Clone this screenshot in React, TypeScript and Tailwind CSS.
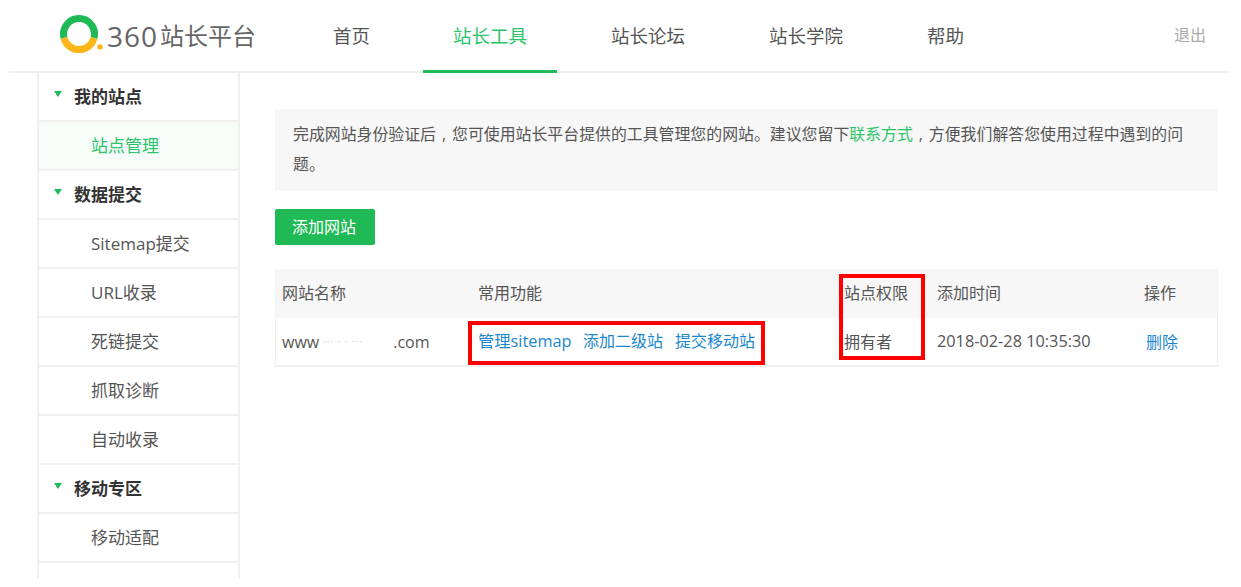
const font = { fontFamily: '"Open Sans","Noto Sans CJK SC",sans-serif' };

function Tri() {
  return <span className="mr-[12px] mb-[5px] h-0 w-0 border-x-[4.5px] border-t-[6px] border-x-transparent border-t-[#22bb5c]" />;
}

function Comma() {
  return <span className="inline-block w-[16px] text-center">{"\uFF0C".normalize("NFKC")}</span>;
}

function Head({ t }: { t: string }) {
  return (
    <div className="flex h-[49px] items-center border-b-2 border-[#f0f0f0] pl-[15px] text-[17px] font-bold text-[#333]">
      <Tri />
      {t}
    </div>
  );
}

function Item({ t, active }: { t: string; active?: boolean }) {
  return (
    <div
      className={
        "flex h-[49px] items-center border-b-2 border-[#f0f0f0] pl-[52px] pt-[1px] text-[17px] " +
        (active ? "bg-[#f6fdf9] text-[#2cc36b]" : "text-[#555]")
      }
    >
      {t}
    </div>
  );
}

function Nav({ t, active, first }: { t: string; active?: boolean; first?: boolean }) {
  return (
    <div
      className={
        "flex h-[73px] items-center border-b-[3px] pl-[30px] pt-[1px] text-[18.5px] " +
        (first ? "pr-[29px] " : "pr-[30px] ") +
        (active ? "border-[#21bb5a] text-[#2cc36b]" : "border-transparent text-[#555]")
      }
    >
      {t}
    </div>
  );
}

export default function App() {
  return (
    <div style={font} className="relative h-[587px] w-[1241px] overflow-hidden bg-white">
      <header className="ml-[9px] flex h-[73px] w-[1218px] items-start border-b-2 border-[#eeeeee]">
        <div className="flex h-[71px] w-[294px] shrink-0 items-center pl-[50px]">
          <svg width="44" height="42" viewBox="0 0 44 42" className="shrink-0">
            <path d="M5 23 A15.5 15.5 0 1 1 35 23" fill="none" stroke="#1fb955" strokeWidth="7" />
            <path d="M35 23 A15.5 15.5 0 0 1 5 23" fill="none" stroke="#fdb61a" strokeWidth="7" />
            <circle cx="41" cy="32" r="2.7" fill="#fdb61a" />
          </svg>
          <span className="ml-[4px] flex items-center whitespace-nowrap text-[24px] leading-none text-[#666]">
            <span className="w-[53px] text-[28px] tracking-[1px]">360</span>
            <span>站长平台</span>
          </span>
        </div>
        <nav className="flex gap-[24px]">
          <Nav t="首页" first />
          <Nav t="站长工具" active />
          <Nav t="站长论坛" />
          <Nav t="站长学院" />
          <Nav t="帮助" />
        </nav>
        <div className="ml-auto flex h-[71px] items-center pb-[1px] pr-[21px] text-[16px] text-[#aaa]">退出</div>
      </header>

      <div className="flex">
        <aside className="ml-[37px] h-[506px] w-[203px] shrink-0 overflow-hidden border-x-2 border-[#f0f0f0]">
          <Head t="我的站点" />
          <Item t="站点管理" active />
          <Head t="数据提交" />
          <Item t="Sitemap提交" />
          <Item t="URL收录" />
          <Item t="死链提交" />
          <Item t="抓取诊断" />
          <Item t="自动收录" />
          <Head t="移动专区" />
          <Item t="移动适配" />
        </aside>

        <main className="ml-[35px] w-[943px] pt-[36px]">
          <div className="bg-[#f7f7f7] pb-[12px] pl-[18px] pr-[30px] pt-[10px] text-[15.9px] leading-[30px] text-[#555]">
            完成网站身份验证后<Comma />您可使用站长平台提供的工具管理您的网站。建议您留下<span className="text-[#2cc36b]">联系方式</span><Comma />方便我们解答您使用过程中遇到的问题。
          </div>

          <button className="mt-[18px] flex h-[36px] w-[100px] items-center justify-center rounded-[2px] bg-[#1fb955] pr-[2px] text-[16px] text-white">
            添加网站
          </button>

          <div className="mt-[24px] border-x border-b-2 border-[#f0f0f0] text-[16px] text-[#555]">
            <div className="grid h-[49px] grid-cols-[196px_366px_93px_207px_1fr] items-center bg-[#f7f7f7] pb-[2px] pl-[6px]">
              <span>网站名称</span>
              <span>常用功能</span>
              <span>站点权限</span>
              <span>添加时间</span>
              <span>操作</span>
            </div>
            <div className="grid h-[47px] grid-cols-[196px_366px_93px_207px_1fr] items-center pl-[6px]">
              <span className="flex items-center">
                www<span className="ml-[4px] w-[70px] text-[10px] tracking-[1px] text-[#ccc]">··· · · ···</span>.com
              </span>
              <span className="flex gap-[12px] text-[#1b87cf]">
                <span className="w-[93px] whitespace-nowrap text-[16.3px]">管理sitemap</span>
                <span>添加二级站</span>
                <span>提交移动站</span>
              </span>
              <span>拥有者</span>
              <span className="text-[16.3px]">2018-02-28 10:35:30</span>
              <span className="pl-[2px] text-[#1b87cf]">删除</span>
            </div>
          </div>
        </main>
      </div>

      <div className="absolute left-[468px] top-[321px] h-[44px] w-[297px] border-4 border-[#ff0000]" />
      <div className="absolute left-[839px] top-[274px] h-[86px] w-[86px] border-4 border-[#ff0000]" />
    </div>
  );
}
